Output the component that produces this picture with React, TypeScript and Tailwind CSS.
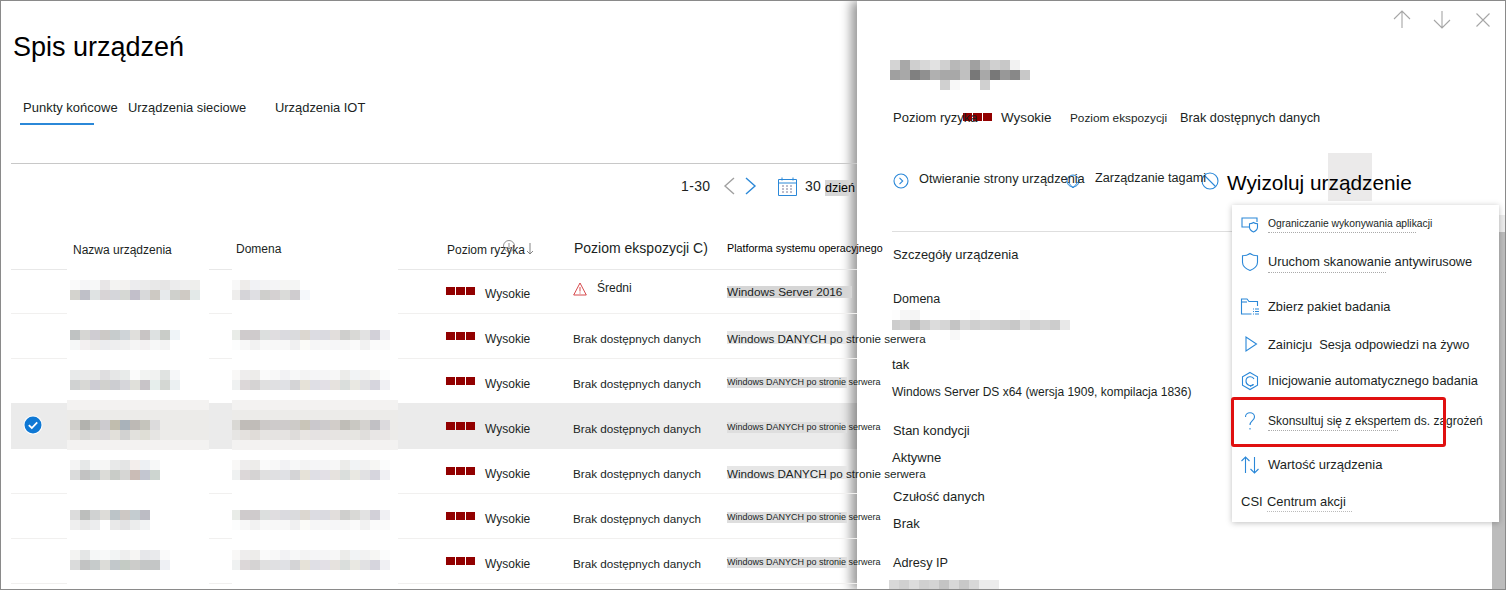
import React from "react";

const Mosaic = ({ rows, first = 10 }: { rows: string[]; first?: number }) => (
  <div className="flex flex-col">
    {rows.map((r, i) => (
      <div key={i} className="flex h-[10px]">
        {r.split(" ").map((c, j) => (
          <div key={j} className="h-[10px] shrink-0" style={{ width: j === 0 ? first : 10, background: "#" + c }} />
        ))}
      </div>
    ))}
  </div>
);

const dA = [
  "e9ece8 cfcbcc cfcbcc dcdfde e0dde0 dadadf dadbdd dcd7d0 dcdce2 dadae0 e2dedc cfcfcd d9d9d6 e2e2e2 d2d0d8 f0f0f3",
  "fcfdfd f8f8f8 f2f2f2 f9f9f9 f8f8f8 f8f8f8 f0f0f1 fbfbf8 f6f6f7 f8f8f8 f6f6f8 f7f7f7 fafafa f2f2f2 fbfbfb fafafa",
];
const dB = [
  "f9f8f7 eeeded edecea fafafa f8f8f8 f2f2f4 f7f8f8 f3f3f3 f5f5f7 f5f5f6 f7f7f7 ececea f1f3f5 f2f2f2 f6f6f3 fbfcfc",
  "eff1f1 dcd7d8 d5d3d3 e0e0e0 e0e0e2 e0e1e5 d4d4d6 e6e2d8 dfdfe5 e3e0e6 e6e2de dadedc e9e8e2 e1e1e3 d6d5dd f0f0f3",
];

const rows = [
  {
    name: ["fafafa f5f5f7 f7f8f8 e8e6e7 f3f3f2 f3f2f0 ececee ebebeb e8e8e8 e6e5e5 ececed efefef eeeeec", "d4d3ce bfc0c8 dfe3e3 d8d4d6 d5d6da d6d8d4 c2bfca d8d9da cdc9c3 e7eaec cfd0cc cfcac4 e3e9e8"],
    dom: ["f8f8f8 eeecea f1f2f5 f3f3f4 f4f4f6 f5f5f3 f4f5f4", "eeedec d5d4d8 dfdfe3 cfcfcc d5d1d2 dadbd9 cfcccf f5f8fb"],
    mp: "pt-[11px]", kind: "first",
  },
  { name: ["bfc2c2 d6d6d3 cfccd2 ccc9c6 c7cccd cfd4d8 e0dfdc c8c4c4 dde1e1 c9ccc8 eff4f8", "f6f8f8 f3f0f1 eeedeb ebecef eeeeef f0f0f0 f5f5f5 f3f1f2 f7f8f8 f3f3f3"], dom: dA, mp: "pt-[16px]", kind: "large" },
  { name: ["e8eaea eaeaea eaeae8 dfdee0 e6e7e7 e8ebea fbfbfb f2f3f2 f1f2f1 e0e3e1 f6f7f9", "d0d2d2 d8d8d5 cdccd3 d1d1ce cccdd1 d6d6da e0e0da c8c4c8 e6eeec d4d7d3 ebf0f2"], dom: dB, mp: "pt-[11px]", kind: "small", beforeSel: true },
  {
    name: ["d0cfcb b2b2ae c3c3bf cccbcf c1bdae a9b2ba bdb9b5 c5c4bc dcdbdc", "e1dfdc d7d7d5 dddcda dbd9da e2e0da d2d2d1 e2e1dd dfded6 e6e5e3"],
    dom: ["d9d8d4 c0bcb8 c0bcb8 ccc9c8 cecbcb cecbcb cdcbc8 c9c5b8 cac8cc cdcbcc d2cdc9 bfbdb7 c9c8c2 d4d2cf c1c0c4 dcdadd", "e6e5e3 e4e1de e0dcd8 e6e4e2 e5e3e1 e5e3e1 dedcda e8e5e2 e5e2e2 e6e3e2 e7e4e2 e6e4e2 e6e5e1 e0dedc e8e6e5 e9e6e5"],
    mp: "pt-[16px]", kind: "small", selected: true,
  },
  { name: ["f4f4f4 e6e8e8 f5f6f6 f6f6f5 e8e9e9 e4e5e5 f3eeec edf0f3 f7f8f8", "dadbdb c2c2c2 c6cbcb dcdcd8 c9ccc8 d6d6d4 cabcb6 c3c6d0 cdd5d0"], dom: dB, mp: "pt-[11px]", kind: "large" },
  { name: ["dcdcdc bcbebc d0d2d2 dddcd8 bcc4c8 cdc8c4 c4ccd0 bcbcc4", "efefef e8e8e8 ecedee ffffff e9e9e9 e3e3e4 eceded f2f3f4"], dom: dA, mp: "pt-[16px]", kind: "small" },
  { name: ["f3f3f2 e4e6e6 f5f7f7 f8f9f9 f2f4f4 eeeeee f6f5f3 e6e7ea e9eaec fafafa", "dadbdb c2c3c3 c6cbcb dcdcd8 c2c8cb c4cbc4 ccccca c4c6c6 c4c6c6 eef0f4"], dom: dB, mp: "pt-[11px]", kind: "small" },
];

const Squares = ({ cls = "" }: { cls?: string }) => (
  <div className={"flex gap-px " + cls}>
    <div className="h-[8px] w-[9px] bg-[#920000]" />
    <div className="h-[8px] w-[9px] bg-[#920000]" />
    <div className="h-[8px] w-[9px] bg-[#920000]" />
  </div>
);

const blue = "#2b88d8";

const Svg = ({ children, cls = "" }: { children: React.ReactNode; cls?: string }) => (
  <svg width={20} height={20} viewBox="0 0 20 20" fill="none" stroke={blue} strokeWidth={1.1} className={"shrink-0 " + cls}>
    {children}
  </svg>
);

const menu = [
  {
    h: "h-[38px]", t: "text-[10.3px]", label: "Ograniczanie wykonywania aplikacji", ghost: "w-[148px]",
    icon: (
      <Svg>
        <path d="M11 13H2V4h15v4" />
        <path d="M13.500 8.500c1.200 1 2.500 1.200 4 1.200v3.500c0 2.200-1.500 3.600-4 4.800-2.500-1.200-4-2.600-4-4.800V9.700c1.500 0 2.800-.2 4-1.200z" fill="#fff" />
      </Svg>
    ),
  },
  {
    h: "h-[38px]", t: "text-[12.8px]", label: "Uruchom skanowanie antywirusowe", ghost: "w-[118px]",
    icon: (
      <Svg>
        <path d="M10 1.500c2.200 1.700 4.700 2.300 7.500 2.300v6.400c0 3.800-2.800 6.300-7.500 8.300-4.700-2-7.500-4.500-7.500-8.300V3.800c2.800 0 5.300-.6 7.500-2.300z" />
      </Svg>
    ),
  },
  {
    h: "h-[52px]", t: "text-[12.8px]", label: "Zbierz pakiet badania",
    icon: (
      <Svg>
        <path d="M17.500 9V4.500H9L7 2H1.500v15h10" />
        <path d="M1.500 5H7" />
        <path d="M13 12h1M15 12h4M13 14.500h1M15 14.500h4M13 17h1M15 17h4" />
      </Svg>
    ),
  },
  {
    h: "h-[24px]", t: "text-[12.8px]", label: "Zainicju  Sesja odpowiedzi na żywo",
    icon: (
      <Svg cls="-mt-[3px]">
        <path d="M6 3v14l10.500-7z" />
      </Svg>
    ),
  },
  {
    h: "h-[48px]", t: "text-[12.8px]", label: "Inicjowanie automatycznego badania",
    icon: (
      <Svg>
        <path d="M10 1.500l7.500 4.200v8.600L10 18.500l-7.500-4.200V5.700z" />
        <path d="M13.500 13.500c-2.500 2-7.500 1-7.500-3.500 0-5 6.500-5.500 8-2" />
        <path d="M13.500 13.500 10 15.500" />
      </Svg>
    ),
  },
  {
    h: "h-[32px]", t: "text-[12px]", label: "Skonsultuj się z ekspertem ds. zagrożeń", ghost: "w-[130px]",
    icon: (
      <Svg>
        <path d="M5.500 6c0-2.500 2-4.200 4.500-4.200s4.500 1.800 4.500 4.200c0 3.600-4.500 3.900-4.500 8" />
        <path d="M10 17v1.500" />
      </Svg>
    ),
  },
  {
    h: "h-[56px]", t: "text-[13px]", label: "Wartość urządzenia",
    icon: (
      <Svg>
        <path d="M5.500 18V2M1.500 6l4-4 4 4M14.500 2v16M10.500 14l4 4 4-4" />
      </Svg>
    ),
  },
];

const Label = ({ children, cls = "" }: { children: React.ReactNode; cls?: string }) => (
  <div className={"h-5 whitespace-nowrap leading-5 text-[#201f1e] " + cls}>{children}</div>
);

export default function App() {
  return (
    <div className="relative flex h-[590px] w-[1506px] overflow-hidden border border-[#8a8a8a] bg-white font-['Liberation_Sans',sans-serif] text-[#201f1e]">
      {/* list */}
      <div className="relative z-10 w-[856px] shrink-0 pl-[10px]">
        <h1 className="mt-[27px] h-[38px] pl-[2px] text-[27px] font-normal leading-[38px] text-black">Spis urządzeń</h1>
        <div className="mt-[32px] flex h-5 pl-[12px] text-[12.9px] leading-5">
          <div className="w-[105px] text-[13px]">Punkty końcowe</div>
          <div className="w-[147px]">Urządzenia sieciowe</div>
          <div>Urządzenia IOT</div>
        </div>
        <div className="ml-[9px] mt-[5px] h-[2px] w-[74px] bg-[#2b88d8]" />
        <div className="mt-[38px] h-px bg-[#c8c8c8]" />
        <div className="flex h-[44px] items-center pl-[670px] text-[14px]">
          <span className="w-[41px] tracking-[0.35px]">1-30</span>
          <svg width="14" height="20" viewBox="0 0 14 20" fill="none" stroke="#a0a0a0" strokeWidth="1.400" className="mr-[8px]"><path d="M12 2 3 10l9 8" /></svg>
          <svg width="14" height="20" viewBox="0 0 14 20" fill="none" stroke={blue} strokeWidth="1.400" className="mr-[20px]"><path d="M2 2l9 8-9 8" /></svg>
          <svg width="19" height="19" viewBox="0 0 19 19" fill="none" stroke={blue} strokeWidth="1" className="mr-[8px]">
            <path d="M.5 2.500h18v16H.5zM.5 6h18" />
            <path d="M4 .5v3M15 .5v3" />
            <path d="M4 9h2M8 9h2M12 9h2M4 12h2M8 12h2M12 12h2M4 15h2M8 15h2M12 15h2" stroke="#7a7a9a" />
          </svg>
          <span className="w-[20px] tracking-[0.2px]">30</span>
          <span className="mt-[3px] h-[16px] w-[24px] whitespace-nowrap bg-[#d6d6d6] text-[12.5px] leading-[16px] text-black">dzień</span>
        </div>
        {/* header */}
        <div className="flex h-[62px] border-b border-[#e8e8e8] pt-[32px] text-[12px] leading-5">
          <div className="w-[62px] shrink-0" />
          <div className="w-[163px] shrink-0">Nazwa urządzenia</div>
          <div className="-mt-[1px] w-[211px] shrink-0">Domena</div>
          <div className="relative flex w-[127px] shrink-0 items-start">
            Poziom ryzyka
            <svg width="14" height="14" viewBox="0 0 14 14" fill="none" stroke="#777" strokeWidth="0.8" className="absolute -top-[1px] left-[55px]"><circle cx="7" cy="7" r="5.500" /><path d="M7 4v6M5 8l2 2 2-2" /></svg>
            <svg width="8" height="14" viewBox="0 0 8 14" fill="none" stroke="#777" strokeWidth="0.9" className="ml-[1px] mt-[2px]"><path d="M4 1v11M1 9l3 3 3-3" /></svg>
          </div>
          <div className="-mt-[2px] w-[153px] shrink-0 text-[14px]">Poziom ekspozycji C)</div>
          <div className="-mt-[2px] whitespace-nowrap text-[10.7px] text-black">Platforma systemu operacyjnego</div>
        </div>
        {/* rows */}
        <div className="-mt-px flex flex-col">
          {rows.map((r, i) => (
            <div
              key={i}
              className={
                "flex h-[45px] border-b text-[12px] " +
                (r.selected ? "border-transparent bg-black/8 " : r.beforeSel ? "border-black/8 " : "border-[#f1f0ef] ")
              }
            >
              <div className="w-[56px] shrink-0">
                {r.selected && (
                  <svg width="20" height="20" viewBox="0 0 20 20" className="ml-[12px] mt-[11px]">
                    <circle cx="10" cy="10" r="9.500" fill="#fff" />
                    <circle cx="10" cy="10" r="8.500" fill="#0f78d4" />
                    <path d="M5.800 10.200l3 2.800 5.400-5.600" fill="none" stroke="#fff" strokeWidth="1.800" />
                  </svg>
                )}
              </div>
              {r.selected ? (
                <>
                  <div className="relative z-10 -mt-[4px] h-[50px] w-[142px] shrink-0 bg-[#f3f2f1] pt-[10px]">
                    <div className="h-[30px] bg-[#ecebe9] pl-[3px] pt-[10px]"><Mosaic rows={r.name} /></div>
                  </div>
                  <div className="w-[23px] shrink-0" />
                  <div className="relative z-10 -mt-[4px] h-[50px] w-[166px] shrink-0 bg-[#f3f2f1] pt-[10px]">
                    <div className="h-[30px] bg-[#ecebe9] pt-[10px]"><Mosaic rows={r.dom} first={8} /></div>
                  </div>
                </>
              ) : (
                <>
                  <div className={"relative h-[46px] w-[142px] shrink-0 bg-white pl-[3px] " + r.mp}><Mosaic rows={r.name} /></div>
                  <div className="w-[23px] shrink-0" />
                  <div className={"relative h-[46px] w-[166px] shrink-0 bg-white " + r.mp}><Mosaic rows={r.dom} first={8} /></div>
                </>
              )}
              <div className="w-[48px] shrink-0" />
              <div className="flex w-[127px] shrink-0 pt-[15px] leading-5">
                <Squares cls="mt-[3px] mr-[10px]" />
                <span>Wysokie</span>
              </div>
              {r.kind === "first" ? (
                <div className="flex w-[154px] shrink-0 pt-[9px] leading-5">
                  <svg width="14" height="14" viewBox="0 0 14 14" fill="none" stroke="#d13438" strokeWidth="0.900" className="mr-[10px] mt-[4px]">
                    <path d="M7 1 .7 13h12.600zM7 5v4.500M7 10.500v1" />
                  </svg>
                  <span>Średni</span>
                </div>
              ) : (
                <div className="w-[154px] shrink-0 pt-[15px] text-[11.7px] leading-5">Brak dostępnych danych</div>
              )}
              {r.kind === "first" && (
                <div className="mt-[17px] h-[12px] w-[125px] whitespace-nowrap bg-[#d6d6d6] text-[11.8px] leading-[13px]">Windows Server 2016</div>
              )}
              {r.kind === "large" && (
                <div className="mt-[17px] h-[13px] w-[120px] whitespace-nowrap bg-[#e6e6e6] text-[11.65px] leading-[15px]">Windows DANYCH po stronie serwera</div>
              )}
              {r.kind === "small" && (
                <div className="mt-[18px] h-[11px] w-[120px] whitespace-nowrap bg-[#dedede] text-[9px] leading-[11px]">Windows DANYCH po stronie serwera</div>
              )}
            </div>
          ))}
        </div>
      </div>

      {/* panel */}
      <div className="relative flex-1 bg-white pl-[35px] shadow-[-6px_0_10px_rgba(0,0,0,0.4)]">
        <div className="flex h-[59px] items-start justify-end pr-[15px] pt-[9px]">
          <svg width="18" height="19" viewBox="0 0 18 19" fill="none" stroke="#a6a6a6" strokeWidth="1.100" className="mr-[22px]"><path d="M9 18V1M1 9l8-8 8 8" /></svg>
          <svg width="18" height="19" viewBox="0 0 18 19" fill="none" stroke="#a6a6a6" strokeWidth="1.100" className="mr-[25px]"><path d="M9 1v17M1 10l8 8 8-8" /></svg>
          <svg width="14" height="14" viewBox="0 0 14 14" fill="none" stroke="#a6a6a6" strokeWidth="1.100" className="mt-[3px]"><path d="M.5.5l13 13M13.500.5l-13 13" /></svg>
        </div>
        <div className="-ml-[2px]">
          <Mosaic rows={[
            "d4d4d4 a8a8a8 cfcfcf d8d8d8 e2e2e2 d0d0d0 b8b8b8 c0c0c0 a0a0a0 c0c0c0 d0d0d0 c8c8c8 f2f2f2",
            "a0a0a0 a8a8a8 808080 909090 b0b0b0 a8a8a8 a8a8a8 c0c0c0 787878 a8a8a8 787878 989898 888888 c8c8c8",
            "ffffff ffffff ffffff ffffff ffffff d0d0d0 f8f8f8 ffffff ffffff d0d0d0",
          ]} />
        </div>
        <div className="mt-[18px] flex h-5 items-center whitespace-nowrap pl-px text-[13px] leading-5">
          <span className="relative z-10 w-[70px]">Poziom ryzyka</span>
          <Squares cls="-mt-[3px] mr-[9px]" />
          <span className="w-[69px] text-[13.4px]">Wysokie</span>
          <span className="w-[110px] text-[11.8px]">Poziom ekspozycji</span>
          <span className="text-[12.8px]">Brak dostępnych danych</span>
        </div>
        <div className="mt-[29px] flex h-[48px] items-center whitespace-nowrap pl-px">
          <svg width="16" height="16" viewBox="0 0 16 16" fill="none" stroke={blue} strokeWidth="1.100" className="mr-[10px]"><circle cx="8" cy="8" r="7" /><path d="M6.500 4.800 9.700 8l-3.200 3.200" /></svg>
          <span className="relative z-10 -mt-[4px] w-[146px] text-[12.8px]">Otwieranie strony urządzenia</span>
          <svg width="16" height="16" viewBox="0 0 16 16" fill="none" stroke={blue} strokeWidth="1" className="mr-[14px]"><circle cx="8" cy="8" r="6" /><path d="M3 9l5 6 5-6" /></svg>
          <span className="relative z-10 -mt-[6px] w-[106px] text-[12.65px]">Zarządzanie tagami</span>
          <svg width="18" height="18" viewBox="0 0 18 18" fill="none" stroke={blue} strokeWidth="1.100" className="mr-[8px]"><circle cx="9" cy="9" r="8" /><path d="M3.500 3.500l11 11" /></svg>
          <span className="relative mt-[4px] text-[20.8px] text-black">
            <span className="absolute -top-[14px] left-[101px] h-[48px] w-[44px] bg-[#ebeaea]" />
            <span className="relative">Wyizoluj urządzenie</span>
          </span>
        </div>
        <div className="mt-[26px] h-px bg-[#dedede]" />
        <Label cls="mt-[13px] ml-px text-[12.9px]">Szczegóły urządzenia</Label>
        <Label cls="mt-[24px] ml-px text-[12.5px]">Domena</Label>
        <div className="mt-[1px]">
          <Mosaic rows={[
            "fdfdfd f6f6f6 f4f4f4 ffffff ffffff ffffff ffffff ffffff fafafa ffffff ffffff ffffff ffffff fafafa",
            "cdcdcd d2d2d2 bdbdbd cfcfcf dcdcdc d6d6d6 c4c4c4 d8d8d8 cfcfcf d4d4d4 d0d0d0 cdcdcd c8c8c8 dcdcdc cfcfcf d4d4d4 cccccc e8e8e8",
            "ffffff ffffff ffffff ffffff ffffff ffffff f8f8f8",
          ]} first={8} />
        </div>
        <Label cls="mt-[15px] text-[13px]">tak</Label>
        <Label cls="mt-[7px] text-[12px]">Windows Server DS x64 (wersja 1909, kompilacja 1836)</Label>
        <Label cls="mt-[19px] ml-px text-[12.9px]">Stan kondycji</Label>
        <Label cls="mt-[7px] text-[13px]">Aktywne</Label>
        <Label cls="mt-[19px] ml-px text-[13px]">Czułość danych</Label>
        <Label cls="mt-[7px] ml-px text-[13px]">Brak</Label>
        <Label cls="mt-[19px] ml-px text-[12.7px]">Adresy IP</Label>
        <div className="-ml-[3px] mt-[7px]">
          <Mosaic rows={["d8d8d8 d0d0d0 dcdcdc d0d0d0 d4d4d4 c4c4c4 d8d8d8 c8c8c8 d8d8d8 ececec ececec"]} />
        </div>
      </div>

      {/* scrollbar */}
      <div className="absolute left-[1491px] top-[214px] z-20 flex h-[375px] w-[13px] flex-col">
        <div className="h-[17px] bg-[#ececec]" />
        <div className="flex-1 bg-[#bcbcbc]" />
      </div>

      {/* menu */}
      <div className="absolute left-[1231px] top-[204px] z-30 flex h-[317px] w-[267px] flex-col bg-white shadow-[0_1px_6px_rgba(0,0,0,0.25)]">
        {menu.map((m) => (
          <div key={m.label} className={"relative flex items-center whitespace-pre pl-[8px] text-[#201f1e] " + m.h + " " + m.t}>
            <span className="mr-[8px] flex w-[20px] justify-start">{m.icon}</span>
            <span className="relative">
              {m.label}
              {m.ghost && <span className={"absolute left-0 top-full h-px border-b border-dotted border-[#aaa] " + m.ghost} />}
            </span>
          </div>
        ))}
        <div className="flex h-[18px] items-center whitespace-pre pl-[9px] text-[13px]">
          <span className="w-[26px]">CSI</span>
          <span className="border-b border-dotted border-[#bbb] pr-[6px] text-[12.9px]">Centrum akcji</span>
        </div>
      </div>

      {/* highlight */}
      <div className="absolute left-[1230px] top-[396px] z-40 h-[50px] w-[215px] rounded-[3px] border-[3px] border-[#e01010]" />
    </div>
  );
}
